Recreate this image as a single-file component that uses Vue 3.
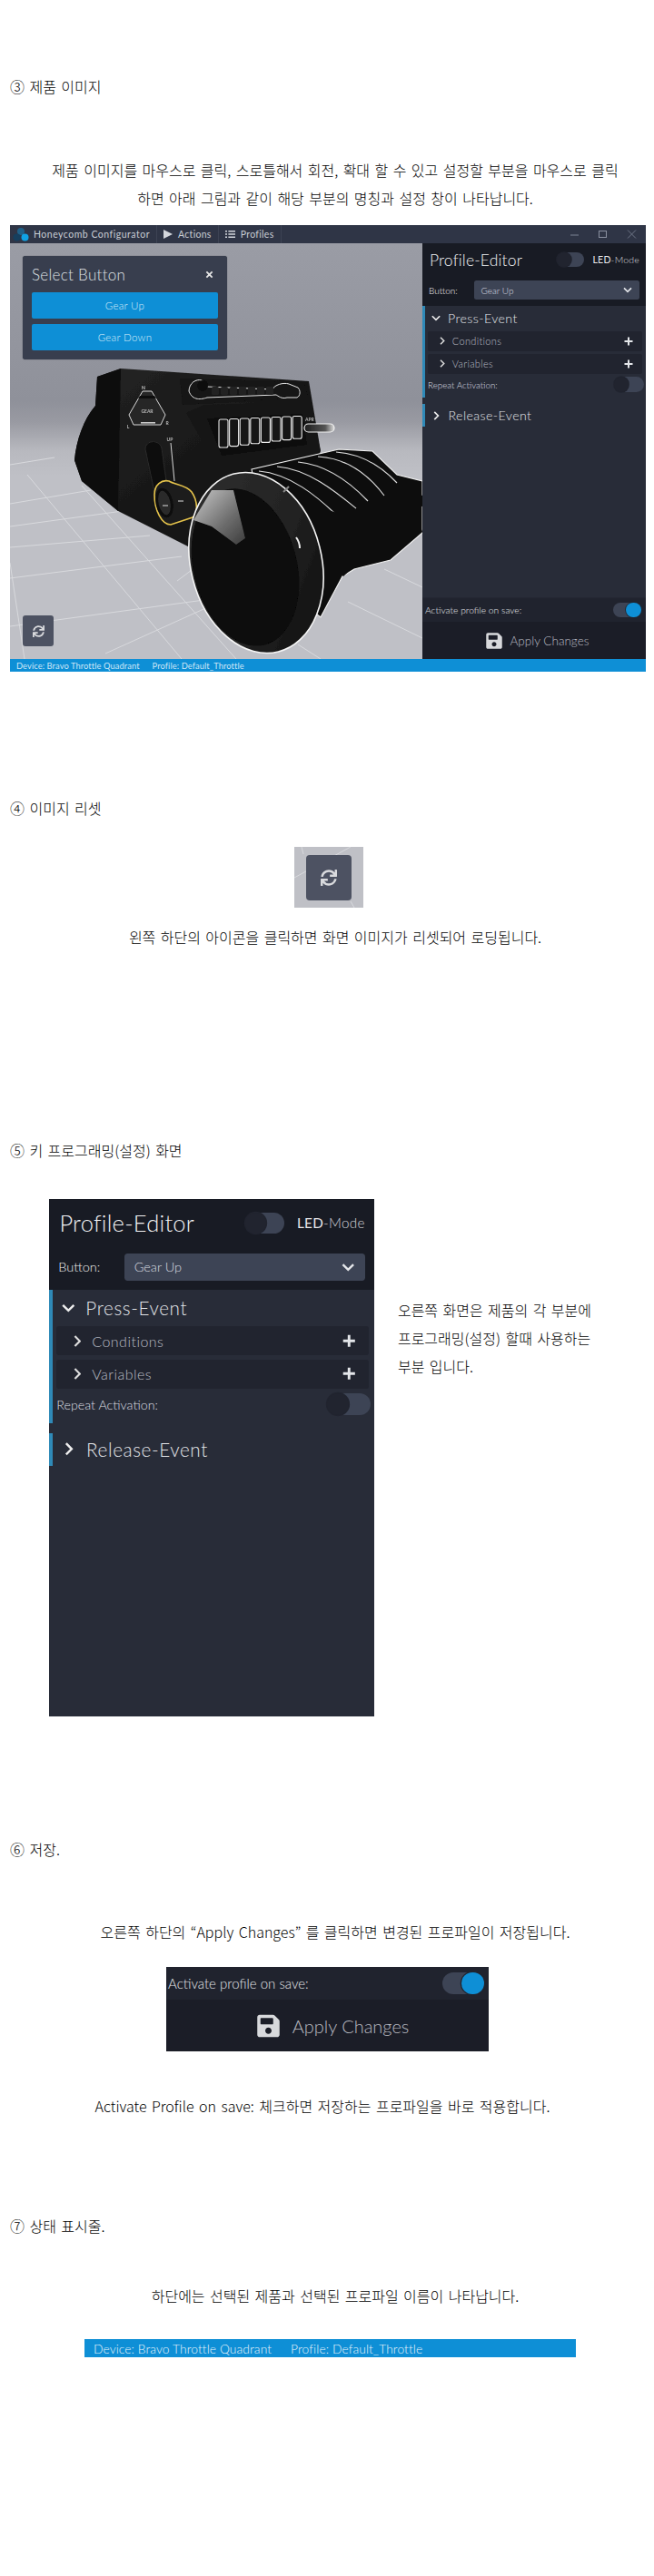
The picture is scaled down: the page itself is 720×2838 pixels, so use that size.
<script setup>
const syncPath = "M440.65 12.57l4 82.77A247.16 247.16 0 0 0 255.83 8C134.73 8 33.91 94.92 12.29 209.82A12 12 0 0 0 24.09 224h49.05a12 12 0 0 0 11.67-9.26 175.91 175.91 0 0 1 317-56.94l-101.46-4.86a12 12 0 0 0-12.57 12v47.41a12 12 0 0 0 12 12H500a12 12 0 0 0 12-12V12a12 12 0 0 0-12-12h-47.37a12 12 0 0 0-11.98 12.57zM255.83 432a175.61 175.61 0 0 1-146-77.8l101.8 4.87a12 12 0 0 0 12.57-12v-47.4a12 12 0 0 0-12-12H12a12 12 0 0 0-12 12V500a12 12 0 0 0 12 12h47.35a12 12 0 0 0 12-12.6l-4.15-82.57A247.17 247.17 0 0 0 255.83 504c121.11 0 221.93-86.92 243.55-201.82a12 12 0 0 0-11.8-14.18h-49.05a12 12 0 0 0-11.67 9.26A175.86 175.86 0 0 1 255.83 432z";
const savePath = "M433.941 129.941l-83.882-83.882A48 48 0 0 0 316.118 32H48C21.49 32 0 53.49 0 80v352c0 26.51 21.49 48 48 48h352c26.51 0 48-21.49 48-48V163.882a48 48 0 0 0-14.059-33.941zM224 416c-35.346 0-64-28.654-64-64 0-35.346 28.654-64 64-64s64 28.654 64 64c0 35.346-28.654 64-64 64zm96-304.52V212c0 6.627-5.373 12-12 12H76c-6.627 0-12-5.373-12-12V108c0-6.627 5.373-12 12-12h228.52c3.183 0 6.235 1.264 8.485 3.515l3.48 3.48A11.996 11.996 0 0 1 320 111.48z";

const floorLines = [
  [11, 690, 232, 660], [11, 637, 200, 613], [11, 603, 165, 590], [11, 580, 135, 563],
  [11, 555, 100, 540], [11, 620, 27, 726], [30, 523, 200, 726], [116, 720, 233, 667],
  [90, 535, 260, 726], [383, 663, 465, 703], [423, 627, 465, 647], [328, 710, 353, 726],
  [11, 512, 60, 504], [195, 640, 215, 625]
];
const rockers = [0, 1, 2, 3, 4, 5, 6, 7];
const pips = [0, 1, 2, 3, 4, 5, 6];
const blades = [
  "M285 519 C 320 522, 350 548, 369 566",
  "M305 514 C 340 517, 370 542, 392 560",
  "M328 509 C 360 512, 386 532, 405 552",
  "M350 503 C 385 505, 408 526, 423 546",
  "M370 498 C 400 500, 422 516, 437 532"
];
</script>

<template>
  <div class="page">
    <h2 class="head h1">③ 제품 이미지</h2>
    <p class="para p1">제품 이미지를 마우스로 클릭, 스로틀해서 회전, 확대 할 수 있고 설정할 부분을 마우스로 클릭<br />하면 아래 그림과 같이 해당 부분의 명칭과 설정 창이 나타납니다.</p>

    <div class="shot">
      <div class="titlebar">
        <div class="tb-item brand">
          <svg class="logo" viewBox="0 0 18 16">
            <circle cx="9" cy="5" r="4" fill="#1f6088" />
            <circle cx="4.5" cy="11.5" r="4" fill="#163f5e" />
            <circle cx="13.5" cy="11.5" r="4" fill="#10a2e4" />
          </svg>
          <span>Honeycomb Configurator</span>
        </div>
        <div class="tb-item">
          <svg class="tb-ico" viewBox="0 0 10 10"><path d="M0 0 L10 5 L0 10 Z" fill="#d3d6dc" /></svg>
          <span>Actions</span>
        </div>
        <div class="tb-item">
          <svg class="tb-ico wide" viewBox="0 0 11 10">
            <path d="M0 1h2v1.6H0zM3.4 1H11v1.6H3.4zM0 4.2h2v1.6H0zM3.4 4.2H11v1.6H3.4zM0 7.4h2V9H0zM3.4 7.4H11V9H3.4z" fill="#d3d6dc" />
          </svg>
          <span>Profiles</span>
        </div>
        <div class="win">
          <svg viewBox="0 0 74 10" class="win-ico">
            <path d="M0 6h9" stroke="#7d8494" fill="none" />
            <rect x="31.5" y="1.5" width="8" height="7" stroke="#8a90a0" fill="none" />
            <path d="M63 0.5l9 9M72 0.5l-9 9" stroke="#6f7686" fill="none" />
          </svg>
        </div>
      </div>

      <div class="main">
        <div class="view">
          <svg class="scene" viewBox="11 268 454 458" preserveAspectRatio="none">
            <defs>
              <linearGradient id="bgGrad" x1="0" y1="0" x2="0" y2="1">
                <stop offset="0" stop-color="#9a9ca5" />
                <stop offset="0.38" stop-color="#8f919a" />
                <stop offset="0.43" stop-color="#999aa2" />
                <stop offset="0.5" stop-color="#b8b9bf" />
                <stop offset="0.56" stop-color="#bfc0c6" />
                <stop offset="1" stop-color="#bfc0c6" />
              </linearGradient>
              <linearGradient id="bodyGrad" x1="0" y1="0" x2="1" y2="1">
                <stop offset="0" stop-color="#242424" />
                <stop offset="1" stop-color="#0c0c0c" />
              </linearGradient>
              <linearGradient id="shine" x1="0" y1="0" x2="1" y2="1">
                <stop offset="0" stop-color="#c9c9c9" />
                <stop offset="0.6" stop-color="#6e6e6e" />
                <stop offset="1" stop-color="#3c3c3c" />
              </linearGradient>
              <linearGradient id="rim" x1="0" y1="0" x2="1" y2="1">
                <stop offset="0" stop-color="#303030" />
                <stop offset="0.55" stop-color="#232323" />
                <stop offset="1" stop-color="#0c0c0c" />
              </linearGradient>
              <linearGradient id="capsule" x1="0" y1="0" x2="1" y2="0">
                <stop offset="0" stop-color="#1c1c1c" />
                <stop offset="0.7" stop-color="#555" />
                <stop offset="1" stop-color="#ddd" />
              </linearGradient>
              <filter id="soft"><feGaussianBlur stdDeviation="0.4" /></filter>
            </defs>
            <rect x="11" y="268" width="454" height="458" fill="url(#bgGrad)" />
            <line v-for="(l, i) in floorLines" :key="i" :x1="l[0]" :y1="l[1]" :x2="l[2]" :y2="l[3]" stroke="#d8d9dd" stroke-width="1" />

            <g filter="url(#soft)">
              <!-- main housing -->
              <path d="M82 507 C 84 485, 92 462, 105 447 L107 415 L133 406 L340 420 L353 497 L300 610 L207 602 L130 563 L90 530 Z" fill="url(#bodyGrad)" />
              <path d="M82 507 C 84 485, 92 462, 105 447 L107 415 L133 406 L130 563 L90 530 Z" fill="#0e0e0e" />

              <!-- gear hexagon -->
              <path d="M142 457 L157 431 L167 431 L182 457 L177 468 L147 468 Z" fill="#262626" stroke="#d8d8d8" stroke-width="1" />
              <path d="M154 436 h16 l2 3 h-20 z" fill="#111" />
              <rect x="155" y="465" width="16" height="1.6" fill="#ccc" />
              <text x="162" y="455" class="tiny" text-anchor="middle" fill="#bbb">GEAR</text>
              <text x="158" y="429" class="tiny" text-anchor="middle" fill="#ccc">N</text>
              <text x="141" y="472" class="tiny" text-anchor="middle" fill="#bbb">L</text>
              <text x="184" y="468" class="tiny" text-anchor="middle" fill="#bbb">R</text>

              <!-- top strip -->
              <path d="M198 417 L335 421 L340 438 L201 446 Z" fill="#121212" />
              <path d="M208 431 C 208 422, 216 417, 222 419 C 226 421, 226 425, 228 426 L300 429 C 302 424, 312 421, 318 423 L328 427 C 331 430, 331 436, 327 438 L316 438 C 310 440, 306 436, 304 435 L228 438 C 222 440, 212 442, 208 431 Z" fill="#181818" stroke="#e6e6e6" stroke-width="1" />
              <circle cx="223" cy="425" r="6" fill="#0b0b0b" />
              <rect v-for="p in pips" :key="p" :x="233 + p * 10" y="426" width="8" height="9" rx="1.5" fill="#242424" />

              <!-- AP panel -->
              <path d="M205 455 L225 446 L330 445 L341 448 L353 497 L236 507 Z" fill="#171717" />
              <path d="M228 461 L333 456 L338 490 L244 502 Z" fill="#0b0b0b" />
              <rect v-for="r in rockers" :key="r" :x="241 + r * 11.6" :y="462 - r * 0.5" width="10" :height="31 - r * 0.9" rx="2" fill="#141414" stroke="#ececec" stroke-width="1.1" />
              <rect x="335" y="467" width="33" height="9" rx="4.5" fill="url(#capsule)" stroke="#efefef" stroke-width="1.2" />
              <text x="336" y="464" class="tiny" fill="#bbb">APR</text>

              <!-- gear slot -->
              <path d="M160 495 C 160 484, 176 484, 178 494 L184 537 L170 542 Z" fill="#0d0d0d" stroke="#2b2b2b" />
              <path d="M188 488 L192 530" stroke="#d8d8d8" stroke-width="1" />
              <text x="187" y="486" class="tiny" text-anchor="middle" fill="#bbb">UP</text>

              <!-- lower wedge & throttle blocks -->
              <path d="M277 517 L373 495 L410 497 L437 523 L465 530 L465 587 L430 617 L390 627 L377 635 L353 680 L300 640 Z" fill="#111" stroke="#f2f2f2" stroke-width="1.1" />
              <path v-for="(b, i) in blades" :key="i" :d="b" fill="none" stroke="#dedede" stroke-width="1.1" />
              <path d="M362 562 L423 583 L427 613 L392 622 L378 635 L370 628 Z" fill="#0a0a0a" />
              <path d="M393 555 L437 575 L442 600 L428 606 L422 582 Z" fill="#0c0c0c" />
              <path d="M415 545 L456 560 L465 586 L445 595 L438 572 Z" fill="#0e0e0e" />
              <path d="M434 533 L465 546 L465 558 L455 557 Z" fill="#0e0e0e" />

              <!-- gear lever -->
              <path d="M170 545 C 170 534, 178 528, 186 530 C 192 534, 205 534, 211 542 C 218 552, 218 566, 212 570 L188 578 C 178 578, 170 562, 170 545 Z" fill="#1e1e1e" stroke="#e5c34b" stroke-width="1.6" />
              <ellipse cx="181" cy="554" rx="8" ry="15" fill="#2c2c2c" stroke="#0c0c0c" stroke-width="3" transform="rotate(-12 181 554)" />
              <path d="M179 557h6M196 552h6" stroke="#ddd" stroke-width="1" />

              <!-- large knob -->
              <ellipse cx="282" cy="620" rx="72" ry="101" fill="url(#rim)" stroke="#f6f6f6" stroke-width="1.6" transform="rotate(-14 282 620)" />
              <ellipse cx="270" cy="625" rx="57" ry="88" fill="#070707" transform="rotate(-14 270 625)" />
              <path d="M213 573 L233 540 L257 540 L270 593 L260 600 L233 580 Z" fill="url(#shine)" />
              <path d="M326 592 C 329 596, 330 600, 330 604" stroke="#efefef" stroke-width="2" fill="none" />
              <path d="M312 542 L318 536" stroke="#888" stroke-width="2" />
            </g>
          </svg>

          <div class="popup">
            <div class="popup-head">
              <span>Select Button</span>
              <svg class="x" viewBox="0 0 10 10"><path d="M1.5 1.5l7 7M8.5 1.5l-7 7" stroke="#e6e6e6" stroke-width="2" /></svg>
            </div>
            <button class="popup-btn">Gear Up</button>
            <button class="popup-btn">Gear Down</button>
          </div>

          <div class="reset">
            <svg class="sync" viewBox="0 0 512 512"><path :d="syncPath" fill="#d9dadd" /></svg>
          </div>
        </div>

        <div class="side">
          <div class="editor">
            <div class="ed-head">
              <div class="ed-top">
                <span class="ed-title">Profile-Editor</span>
                <span class="toggle off led"><i></i></span>
                <span class="led-label"><b>LED</b>-Mode</span>
              </div>
              <div class="ed-select-row">
                <span class="ed-btn-label">Button:</span>
                <div class="ed-select">
                  <span>Gear Up</span>
                  <svg class="chev" viewBox="0 0 12 8"><path d="M1.2 1.5L6 6.2l4.8-4.7" fill="none" stroke="#e4e6ea" stroke-width="2" /></svg>
                </div>
              </div>
            </div>
            <div class="ev open">
              <div class="ev-head">
                <svg class="ev-chev down" viewBox="0 0 12 8"><path d="M1 1.3L6 6.3l5-5" fill="none" stroke="#eee" stroke-width="2" /></svg>
                <span>Press-Event</span>
              </div>
              <div class="sub">
                <svg class="sub-chev" viewBox="0 0 8 12"><path d="M1.3 1L6.3 6l-5 5" fill="none" stroke="#ddd" stroke-width="2" /></svg>
                <span class="sub-t">Conditions</span>
                <svg class="plus" viewBox="0 0 10 10"><path d="M5 .5v9M.5 5h9" stroke="#e4e6ea" stroke-width="2" /></svg>
              </div>
              <div class="sub">
                <svg class="sub-chev" viewBox="0 0 8 12"><path d="M1.3 1L6.3 6l-5 5" fill="none" stroke="#ddd" stroke-width="2" /></svg>
                <span class="sub-t">Variables</span>
                <svg class="plus" viewBox="0 0 10 10"><path d="M5 .5v9M.5 5h9" stroke="#e4e6ea" stroke-width="2" /></svg>
              </div>
              <div class="repeat">
                <span>Repeat Activation:</span>
                <span class="toggle off rep"><i></i></span>
              </div>
            </div>
            <div class="ev closed">
              <div class="ev-head">
                <svg class="ev-chev right" viewBox="0 0 8 12"><path d="M1.3 1L6.3 6l-5 5" fill="none" stroke="#eee" stroke-width="2" /></svg>
                <span>Release-Event</span>
              </div>
            </div>
          </div>
          <div class="activate">
            <span>Activate profile on save:</span>
            <span class="toggle on"><i></i></span>
          </div>
          <div class="apply">
            <svg class="save" viewBox="0 0 448 512"><path :d="savePath" fill="#d8d9dc" /></svg>
            <span>Apply Changes</span>
          </div>
        </div>
      </div>

      <div class="status">
        <span>Device: Bravo Throttle Quadrant</span>
        <span>Profile: Default_Throttle</span>
      </div>
    </div>

    <h2 class="head h2b">④ 이미지 리셋</h2>
    <div class="reset-crop">
      <svg class="crop-lines" viewBox="0 0 76 67" preserveAspectRatio="none">
        <path d="M0 34L62 0M8 0L10 8M62 60L66 67" stroke="#d8d9dd" fill="none" />
      </svg>
      <div class="reset-big">
        <svg class="sync-big" viewBox="0 0 512 512"><path :d="syncPath" fill="#d9dadd" /></svg>
      </div>
    </div>
    <p class="para p2">왼쪽 하단의 아이콘을 클릭하면 화면 이미지가 리셋되어 로딩됩니다.</p>

    <h2 class="head h3">⑤ 키 프로그래밍(설정) 화면</h2>
    <div class="split">
      <div class="editor big">
        <div class="ed-head">
          <div class="ed-top">
            <span class="ed-title">Profile-Editor</span>
            <span class="toggle off led"><i></i></span>
            <span class="led-label"><b>LED</b>-Mode</span>
          </div>
          <div class="ed-select-row">
            <span class="ed-btn-label">Button:</span>
            <div class="ed-select">
              <span>Gear Up</span>
              <svg class="chev" viewBox="0 0 12 8"><path d="M1.2 1.5L6 6.2l4.8-4.7" fill="none" stroke="#e4e6ea" stroke-width="2" /></svg>
            </div>
          </div>
        </div>
        <div class="ev open">
          <div class="ev-head">
            <svg class="ev-chev down" viewBox="0 0 12 8"><path d="M1 1.3L6 6.3l5-5" fill="none" stroke="#eee" stroke-width="2" /></svg>
            <span>Press-Event</span>
          </div>
          <div class="sub">
            <svg class="sub-chev" viewBox="0 0 8 12"><path d="M1.3 1L6.3 6l-5 5" fill="none" stroke="#ddd" stroke-width="2" /></svg>
            <span class="sub-t">Conditions</span>
            <svg class="plus" viewBox="0 0 10 10"><path d="M5 .5v9M.5 5h9" stroke="#e4e6ea" stroke-width="2" /></svg>
          </div>
          <div class="sub">
            <svg class="sub-chev" viewBox="0 0 8 12"><path d="M1.3 1L6.3 6l-5 5" fill="none" stroke="#ddd" stroke-width="2" /></svg>
            <span class="sub-t">Variables</span>
            <svg class="plus" viewBox="0 0 10 10"><path d="M5 .5v9M.5 5h9" stroke="#e4e6ea" stroke-width="2" /></svg>
          </div>
          <div class="repeat">
            <span>Repeat Activation:</span>
            <span class="toggle off rep"><i></i></span>
          </div>
        </div>
        <div class="ev closed">
          <div class="ev-head">
            <svg class="ev-chev right" viewBox="0 0 8 12"><path d="M1.3 1L6.3 6l-5 5" fill="none" stroke="#eee" stroke-width="2" /></svg>
            <span>Release-Event</span>
          </div>
        </div>
      </div>
      <p class="split-text">오른쪽 화면은 제품의 각 부분에<br />프로그래밍(설정) 할때 사용하는<br />부분 입니다.</p>
    </div>

    <h2 class="head h4">⑥ 저장.</h2>
    <p class="para p3">오른쪽 하단의 “Apply Changes” 를 클릭하면 변경된 프로파일이 저장됩니다.</p>
    <div class="save-crop">
      <div class="activate">
        <span>Activate profile on save:</span>
        <span class="toggle on"><i></i></span>
      </div>
      <div class="apply">
        <svg class="save" viewBox="0 0 448 512"><path :d="savePath" fill="#d8d9dc" /></svg>
        <span>Apply Changes</span>
      </div>
    </div>
    <p class="para p4">Activate Profile on save: 체크하면 저장하는 프로파일을 바로 적용합니다.</p>

    <h2 class="head h5">⑦ 상태 표시줄.</h2>
    <p class="para p5">하단에는 선택된 제품과 선택된 프로파일 이름이 나타납니다.</p>
    <div class="status big-status">
      <span>Device: Bravo Throttle Quadrant</span>
      <span>Profile: Default_Throttle</span>
    </div>
  </div>
</template>

<style scoped>
.page {
  width: 720px;
  height: 2838px;
  box-sizing: border-box;
  padding-top: 80px;
  background: #fff;
  color: #000;
  font-family: "Noto Sans CJK KR", "Noto Sans", sans-serif;
  font-weight: 300;
  overflow: hidden;
}
.head {
  margin: 0;
  padding-left: 11px;
  font-size: 16px;
  font-weight: 300;
  line-height: 31px;
  word-spacing: 1.9px;
}
.para {
  margin: 0;
  padding-left: 18px;
  text-align: center;
  font-size: 16px;
  line-height: 31px;
  word-spacing: 1.9px;
}
.p1 { margin-top: 61px; }
.h2b { margin-top: 135px; }
.p2 { margin-top: 17px; }
.h3 { margin-top: 204px; }
.h4 { margin-top: 131px; }
.p3 { margin-top: 60px; }
.p4 { margin-top: 45px; padding-left: 0; padding-right: 10px; }
.h5 { margin-top: 101px; }
.p5 { margin-top: 46px; }

/* screenshot */
.shot {
  margin: 14px 0 0 11px;
  width: 700px;
  font-family: Lato, "Noto Sans", sans-serif;
  display: flex;
  flex-direction: column;
}
.titlebar {
  height: 20px;
  background: #2f3546;
  display: flex;
  color: #c9cdd5;
  font-size: 10.5px;
  font-weight: 400;
}
.tb-item {
  display: flex;
  align-items: center;
  gap: 6px;
  padding: 0 7px;
  border-right: 1px solid #3d4354;
  letter-spacing: 0.3px;
}
.tb-item.brand { padding: 0 7px 0 3px; gap: 5px; letter-spacing: 0.5px; }
.logo { width: 18px; height: 16px; }
.tb-ico { width: 10px; height: 10px; }
.tb-ico.wide { width: 11px; }
.win { margin-left: auto; display: flex; align-items: center; padding-right: 9px; }
.win-ico { width: 74px; height: 10px; }
.main { display: flex; height: 458px; }
.view {
  position: relative;
  width: 454px;
  height: 458px;
  flex: none;
  overflow: hidden;
}
.scene { display: block; width: 454px; height: 458px; }
.tiny { font-size: 5px; font-family: Lato, sans-serif; font-weight: 700; }
.popup {
  position: absolute;
  left: 14px;
  top: 14px;
  width: 225px;
  height: 114px;
  box-sizing: border-box;
  padding: 0 10px;
  background: #383e4e;
  border-radius: 3px;
  box-shadow: 0 0 1px #2a2e3a;
}
.popup-head {
  height: 40px;
  display: flex;
  align-items: center;
  justify-content: space-between;
  color: #dfe1e5;
  font-size: 17px;
  font-weight: 300;
  letter-spacing: 0.3px;
}
.x { width: 9px; height: 9px; margin-right: 5px; }
.popup-btn {
  display: block;
  width: 205px;
  height: 29px;
  margin: 0 0 6px;
  padding: 0;
  border: 0;
  border-radius: 2px;
  background: #0e8fd6;
  color: #d4ebf8;
  font-family: inherit;
  font-size: 11.5px;
  font-weight: 300;
  letter-spacing: 0.3px;
}
.reset {
  position: absolute;
  left: 14px;
  top: 410px;
  width: 34px;
  height: 34px;
  background: #4d5262;
  border-radius: 3px;
  display: flex;
  align-items: center;
  justify-content: center;
}
.sync { width: 13px; height: 13px; }

.side { flex: 1; display: flex; flex-direction: column; font-size: 10px; }

/* editor: every dimension in em so it scales */
.editor {
  font-size: 10px;
  width: 24.6em;
  height: 39em;
  flex: none;
  background: #282c38;
  color: #e8eaee;
}
.editor.big { font-size: 14.55px; height: 39.18em; flex: none; }
.ed-head { height: 6.9em; background: #181b24; box-sizing: border-box; padding: 0 .7em; }
.ed-top { height: 3.6em; display: flex; align-items: center; }
.ed-title { font-size: 1.75em; font-weight: 300; padding-left: .05em; color: #f2f3f5; letter-spacing: .01em; width: 8.45em; }
.led-label { margin-left: .9em; font-size: 1.05em; font-weight: 300; white-space: nowrap; color: #d4d6db; letter-spacing: .02em; }
.led-label b { font-weight: 400; color: #e8e9ec; }
.toggle {
  display: inline-flex;
  align-items: center;
  flex: none;
  width: 3em;
  height: 1.6em;
  border-radius: .8em;
  background: #3d4455;
  position: relative;
}
.toggle i {
  position: absolute;
  top: 0;
  width: 1.6em;
  height: 1.6em;
  border-radius: 50%;
  background: #21242f;
  box-shadow: 0 0 0 .08em #21242f;
}
.toggle.off i { left: 0; }
.toggle.on i { right: 0; background: #0e8fd6; }
.toggle.rep { width: 3.3em; height: 1.65em; border-radius: .85em; }
.toggle.rep i { width: 1.65em; height: 1.65em; }
.ed-select-row { display: flex; align-items: center; height: 2.1em; margin-top: 0.5em; }
.ed-btn-label { width: 5.05em; font-size: 1em; font-weight: 300; color: #f0f0f0; }
.ed-select {
  width: 18.2em;
  height: 2.1em;
  margin-left: auto;
  box-sizing: border-box;
  padding: 0 .8em 0 .7em;
  background: #3d4455;
  border-radius: .25em;
  display: flex;
  align-items: center;
  justify-content: space-between;
  color: #d9dbe0;
  font-size: 1em;
  font-weight: 300;
}
.chev { width: 1em; height: .7em; }
.ev { border-left: .3em solid #2f8ab8; box-sizing: border-box; }
.ev.open { height: 10.1em; }
.ev.closed { height: 2.5em; margin-top: .7em; }
.ev-head { height: 2.75em; display: flex; align-items: center; font-size: 1em; }
.ev.closed .ev-head { height: 2.5em; }
.ev-head span { font-size: 1.42em; font-weight: 300; color: #e3e5e9; letter-spacing: .03em; }
.ev-chev.down { width: 1em; height: .7em; margin: 0 .8em 0 .7em; }
.ev-chev.right { width: .7em; height: 1em; margin: 0 .95em 0 .9em; }
.sub {
  height: 2.2em;
  margin: 0 .4em .3em .3em;
  background: #21242f;
  border-radius: .2em;
  display: flex;
  align-items: center;
  box-sizing: border-box;
  padding: 0 1em 0 1.25em;
}
.sub-chev { width: .6em; height: .9em; flex: none; }
.sub-t { margin-left: .75em; font-size: 1.1em; font-weight: 300; color: #b8bbc3; letter-spacing: .03em; }
.plus { width: 1em; height: 1em; margin-left: auto; }
.repeat {
  display: flex;
  align-items: center;
  justify-content: space-between;
  height: 2em;
  padding: 0 .25em 0 .3em;
  margin-top: -.1em;
}
.repeat span:first-child { font-size: .98em; font-weight: 300; color: #dcdee2; }
.activate {
  height: 27px;
  flex: none;
  background: #20232e;
  border-top: 1px solid #242733;
  box-sizing: border-box;
  display: flex;
  align-items: center;
  justify-content: space-between;
  padding: 0 5px 0 3px;
  color: #e3e5e9;
  font-size: 10.3px;
  font-weight: 300;
}
.activate .toggle { font-size: 10.5px; }
.apply {
  flex: 1;
  background: #1b1d27;
  display: flex;
  align-items: center;
  justify-content: center;
  gap: 9px;
  padding-left: 7px;
  color: #b9bbc2;
  font-size: 13.5px;
  font-weight: 300;
}
.save { width: 18px; height: 20px; }
.status {
  height: 14px;
  background: #0e8fd6;
  color: #cde6f6;
  display: flex;
  align-items: center;
  gap: 14px;
  padding-left: 7px;
  font-size: 9.3px;
  font-weight: 400;
  letter-spacing: .1px;
}

/* reset crop */
.reset-crop {
  position: relative;
  margin: 27px 0 0 324px;
  width: 76px;
  height: 67px;
  background: #bfc0c6;
  display: flex;
  align-items: center;
  justify-content: center;
}
.crop-lines { position: absolute; inset: 0; width: 100%; height: 100%; }
.reset-big {
  position: relative;
  width: 50px;
  height: 50px;
  background: #4d5262;
  border-radius: 4px;
  display: flex;
  align-items: center;
  justify-content: center;
}
.sync-big { width: 18px; height: 18px; }

/* editor section */
.split { margin: 38px 0 0 54px; display: flex; font-family: Lato, "Noto Sans", sans-serif; }
.split-text {
  margin: 107px 0 0 26px;
  font-family: "Noto Sans CJK KR", sans-serif;
  font-size: 16px;
  line-height: 31px;
  word-spacing: 1.9px;
  white-space: nowrap;
}

/* save crop */
.save-crop {
  margin: 23px 0 0 183px;
  width: 355px;
  height: 93px;
  display: flex;
  flex-direction: column;
  font-family: Lato, "Noto Sans", sans-serif;
}
.save-crop .activate { height: 36px; font-size: 15px; padding: 0 5px 0 2px; border: 0; }
.save-crop .activate .toggle { font-size: 15.4px; }
.save-crop .apply { font-size: 20px; gap: 14px; padding-left: 12px; }
.save-crop .save { width: 25px; height: 28px; }

.big-status {
  margin: 32px 0 0 93px;
  width: 541px;
  height: 20px;
  box-sizing: border-box;
  padding-left: 10px;
  gap: 21px;
  font-family: Lato, "Noto Sans", sans-serif;
  font-size: 13.8px;
  color: #e8f3fa;
  font-weight: 300;
}
</style>
